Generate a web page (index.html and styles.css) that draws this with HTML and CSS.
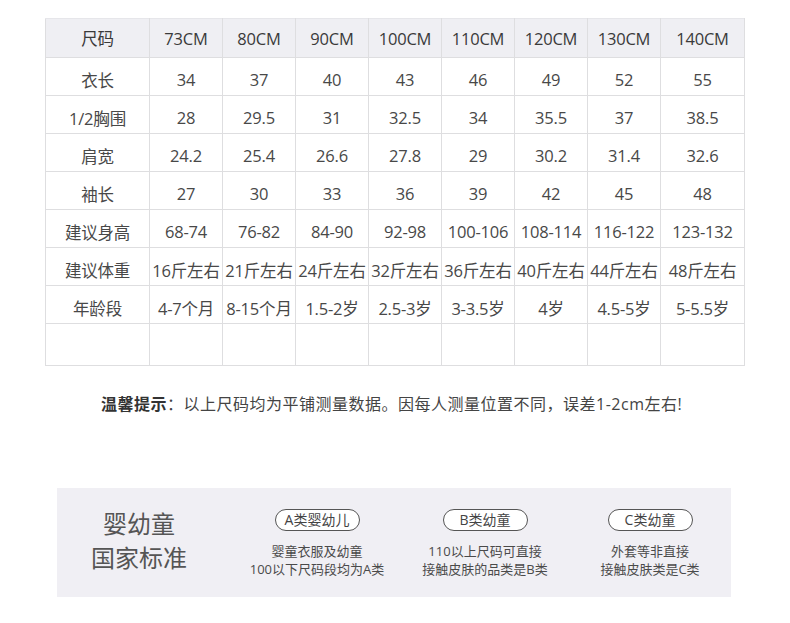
FILE: index.html
```html
<!DOCTYPE html>
<html lang="zh-CN">
<head>
<meta charset="utf-8">
<title>尺码表</title>
<link rel="stylesheet" href="styles.css">
</head>
<body>
<div class="page">
  <table class="size-table">
    <colgroup>
      <col class="c-label">
      <col class="c-size"><col class="c-size"><col class="c-size"><col class="c-size">
      <col class="c-size"><col class="c-size"><col class="c-size"><col class="c-last">
    </colgroup>
    <thead>
      <tr><th>尺码</th><th>73CM</th><th>80CM</th><th>90CM</th><th>100CM</th><th>110CM</th><th>120CM</th><th>130CM</th><th>140CM</th></tr>
    </thead>
    <tbody>
      <tr><td>衣长</td><td>34</td><td>37</td><td>40</td><td>43</td><td>46</td><td>49</td><td>52</td><td>55</td></tr>
      <tr><td>1/2胸围</td><td>28</td><td>29.5</td><td>31</td><td>32.5</td><td>34</td><td>35.5</td><td>37</td><td>38.5</td></tr>
      <tr><td>肩宽</td><td>24.2</td><td>25.4</td><td>26.6</td><td>27.8</td><td>29</td><td>30.2</td><td>31.4</td><td>32.6</td></tr>
      <tr><td>袖长</td><td>27</td><td>30</td><td>33</td><td>36</td><td>39</td><td>42</td><td>45</td><td>48</td></tr>
      <tr><td>建议身高</td><td>68-74</td><td>76-82</td><td>84-90</td><td>92-98</td><td>100-106</td><td>108-114</td><td>116-122</td><td>123-132</td></tr>
      <tr><td>建议体重</td><td>16斤左右</td><td>21斤左右</td><td>24斤左右</td><td>32斤左右</td><td>36斤左右</td><td>40斤左右</td><td>44斤左右</td><td>48斤左右</td></tr>
      <tr><td>年龄段</td><td>4-7个月</td><td>8-15个月</td><td>1.5-2岁</td><td>2.5-3岁</td><td>3-3.5岁</td><td>4岁</td><td>4.5-5岁</td><td>5-5.5岁</td></tr>
      <tr class="empty"><td></td><td></td><td></td><td></td><td></td><td></td><td></td><td></td><td></td></tr>
    </tbody>
  </table>

  <p class="notice"><strong>温馨提示</strong>：以上尺码均为平铺测量数据。因每人测量位置不同，误差1-2cm左右!</p>

  <section class="standard">
    <div class="standard-title">婴幼童<br>国家标准</div>
    <div class="cat">
      <span class="pill">A类婴幼儿</span>
      <p class="desc">婴童衣服及幼童<br>100以下尺码段均为A类</p>
    </div>
    <div class="cat">
      <span class="pill">B类幼童</span>
      <p class="desc">110以上尺码可直接<br>接触皮肤的品类是B类</p>
    </div>
    <div class="cat">
      <span class="pill">C类幼童</span>
      <p class="desc">外套等非直接<br>接触皮肤类是C类</p>
    </div>
  </section>
</div>
</body>
</html>
```

FILE: styles.css
```css
* { box-sizing: border-box; }
html, body { margin: 0; padding: 0; background: #fff; }
body {
  font-family: "Open Sans", "Noto Sans CJK SC", sans-serif;
  color: #444;
}
.page {
  width: 790px;
  padding-top: 18px;
}
.size-table {
  margin-left: 45px;
  width: 699px;
  border-collapse: collapse;
  table-layout: fixed;
  font-size: 16.5px;
}
.c-label { width: 104px; }
.c-size { width: 73px; }
.c-last { width: 84px; }
.size-table th,
.size-table td {
  border: 1px solid #dedee0;
  text-align: center;
  height: 38px;
  padding: 0;
  white-space: nowrap;
  font-weight: normal;
  overflow: hidden;
  letter-spacing: -0.2px;
}
.size-table thead th {
  background: #efeff3;
  color: #3a3a3a;
  height: 39px;
  border-top-color: #e6e6ea;
}
.size-table tbody td {
  color: #484848;
  padding-top: 6px;
}
.size-table tr.empty td { height: 42px; }

.notice {
  margin: 0;
  padding-top: 28px;
  padding-left: 101px;
  font-size: 16px;
  line-height: 20px;
  color: #444;
  letter-spacing: 0.5px;
}
.notice strong { font-weight: bold; color: #333; }

.standard {
  margin: 74px 0 0 57px;
  width: 674px;
  height: 109px;
  background: #f0eff4;
  display: grid;
  grid-template-columns: 176px 168px 168px 162px;
  align-items: start;
}
.standard-title {
  align-self: center;
  padding-right: 12px;
  padding-bottom: 3px;
  text-align: center;
  font-size: 24px;
  line-height: 34px;
  color: #555;
}
.cat {
  padding-top: 20px;
  text-align: center;
}
.pill {
  display: inline-block;
  width: 85px;
  height: 22px;
  border: 1px solid #555;
  border-radius: 11px;
  font-size: 14px;
  line-height: 20px;
  color: #444;
  background: #fff;
}
.desc {
  margin: 11px 0 0;
  font-size: 13px;
  line-height: 18px;
  color: #4a4a4a;
}
```
